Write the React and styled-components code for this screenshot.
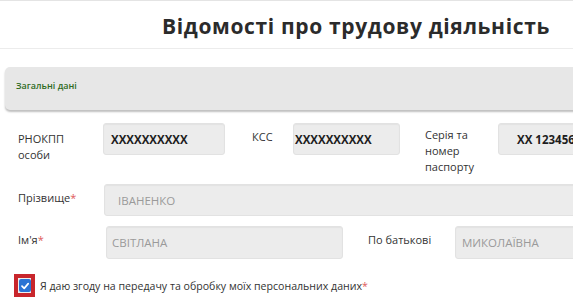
import React from "react";
import styled, { createGlobalStyle } from "styled-components";

const Global = createGlobalStyle`
  html, body { margin: 0; padding: 0; background: #fff; overflow: hidden; }
  body { font-family: "Open Sans", "Liberation Sans", sans-serif; color: #333; }
  * { box-sizing: border-box; }
`;

const Page = styled.div`
  width: 573px;
  height: 300px;
  overflow: hidden;
  border-top: 1px solid #e4e4e4;
`;

const Header = styled.header`
  height: 48px;
  border-bottom: 1px solid #ececec;
  display: flex;
  align-items: center;
  justify-content: flex-end;
  padding-right: 23px;
`;

const Title = styled.h1`
  margin: 0;
  font-family: "Open Sans", "Liberation Sans", sans-serif;
  font-weight: 700;
  font-size: 21px;
  letter-spacing: 0.65px;
  color: #2b2b2b;
  padding-top: 2px;
`;

const Panel = styled.div`
  margin: 18px 0 0 5px;
  height: 43px;
  width: 600px;
  background: #e7e7e7;
  border-radius: 5px;
  box-shadow: 0 2px 2px rgba(0, 0, 0, 0.25);
  display: flex;
  align-items: center;
  padding: 0 0 7px 11px;
`;

const PanelTitle = styled.span`
  font-size: 9px;
  font-weight: 600;
  color: #2f6b1e;
`;

const Row = styled.div`
  display: flex;
  align-items: flex-start;
  padding-left: 18px;
  margin-top: ${(p) => p.$mt}px;
  width: 700px;
`;

const Label = styled.div`
  width: ${(p) => p.$w}px;
  margin-left: ${(p) => p.$ml || 0}px;
  padding-top: ${(p) => p.$pt || 0}px;
  font-size: 11px;
  line-height: 16px;
  color: #333;
  flex-shrink: 0;
`;

const Req = styled.span`
  color: #e05a5a;
`;

const Input = styled.div`
  width: ${(p) => (p.$w ? p.$w + "px" : "auto")};
  flex: ${(p) => (p.$w ? "0 0 auto" : "1")};
  height: ${(p) => p.$h || 32}px;
  background: #ececec;
  border: 1px solid #e2e2e2;
  border-radius: 3px;
  box-shadow: inset 0 1px 1px rgba(0, 0, 0, 0.04);
  display: flex;
  align-items: center;
  padding-left: ${(p) => p.$pl || 8}px;
  font-size: ${(p) => (p.$bold ? 11.5 : 11.5)}px;
  font-weight: ${(p) => (p.$bold ? 700 : 400)};
  color: ${(p) => (p.$bold ? "#1e1e1e" : "#9a9a9a")};
  white-space: nowrap;
  overflow: hidden;
`;

const Consent = styled.div`
  display: flex;
  align-items: center;
  margin: 15px 0 0 14px;
  gap: 5px;
`;

const Highlight = styled.div`
  width: 21px;
  height: 23px;
  border: 4px solid #c8262c;
  background: #eee;
  display: flex;
  align-items: center;
  justify-content: center;
`;

const Check = styled.div`
  width: 12px;
  height: 13px;
  background: #2a73d4;
  border-radius: 2px;
  display: flex;
  align-items: center;
  justify-content: center;
`;

const ConsentText = styled.span`
  font-size: 10.6px;
  color: #333;
`;

export default function App() {
  return (
    <Page>
      <Global />
      <Header>
        <Title>Відомості про трудову діяльність</Title>
      </Header>
      <Panel>
        <PanelTitle>Загальні дані</PanelTitle>
      </Panel>
      <Row $mt={13}>
        <Label $w={85} $pt={8}>
          РНОКПП
          <br />
          особи
        </Label>
        <Input $w={122} $bold $pl={7}>XXXXXXXXXX</Input>
        <Label $w={41} $ml={27} $pt={6}>
          КСС
        </Label>
        <Input $w={107} $bold $pl={1}>XXXXXXXXXX</Input>
        <Label $w={73} $ml={25} $pt={4}>
          Серія та
          <br />
          номер
          <br />
          паспорту
        </Label>
        <Input $w={130} $bold $pl={18}>XX 123456</Input>
      </Row>
      <Row $mt={9}>
        <Label $w={86} $pt={6}>
          Прізвище<Req>*</Req>
        </Label>
        <Input $pl={13}>ІВАНЕНКО</Input>
      </Row>
      <Row $mt={10}>
        <Label $w={88} $pt={6}>
          Ім'я<Req>*</Req>
        </Label>
        <Input $w={237} $h={33} $pl={5}>СВІТЛАНА</Input>
        <Label $w={87} $ml={25} $pt={6}>
          По батькові
        </Label>
        <Input $w={200} $h={33} $pl={6}>МИКОЛАЇВНА</Input>
      </Row>
      <Consent>
        <Highlight>
          <Check>
            <svg width="10" height="10" viewBox="0 0 10 10">
              <path d="M2 5.2 L4.2 7.4 L8.2 2.6" stroke="#fff" strokeWidth="1.7" fill="none" strokeLinecap="round" strokeLinejoin="round" />
            </svg>
          </Check>
        </Highlight>
        <ConsentText>
          Я даю згоду на передачу та обробку моїх персональних даних<Req>*</Req>
        </ConsentText>
      </Consent>
    </Page>
  );
}
